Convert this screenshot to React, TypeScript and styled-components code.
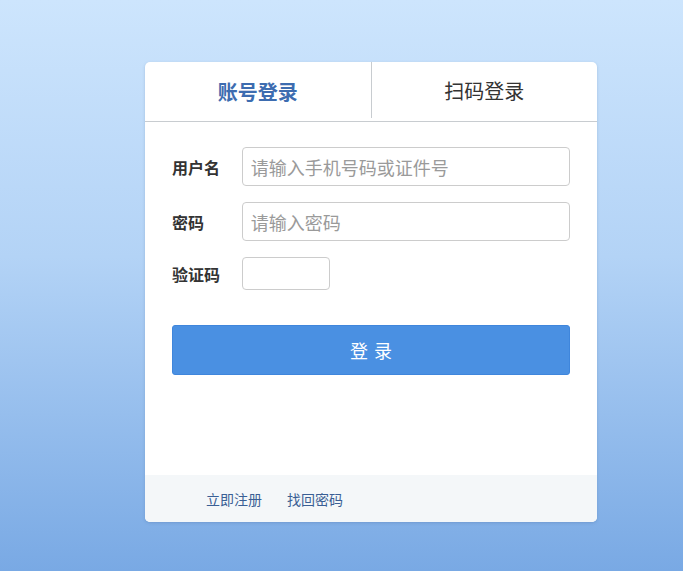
import styled, { createGlobalStyle } from "styled-components";

const GlobalStyle = createGlobalStyle`
    html, body {
        margin: 0;
        padding: 0;
    }
    body {
        font-family: "Noto Sans CJK SC", "Liberation Sans", sans-serif;
    }
`;

const Page = styled.div`
    min-height: 100vh;
    box-sizing: border-box;
    padding: 62px 0 0 145px;
    background: linear-gradient(to bottom, #cde5fd 0%, #b3d3f6 45%, #79a9e4 100%);
`;

const Card = styled.div`
    width: 452px;
    height: 460px;
    background: #fff;
    border-radius: 5px;
    box-shadow: 0 1px 3px rgba(60, 90, 140, 0.25);
    display: flex;
    flex-direction: column;
    overflow: hidden;
`;

const Tabs = styled.div`
    display: flex;
    height: 59px;
    border-bottom: 1px solid #c8ccd0;
`;

const Tab = styled.div<{ active?: boolean }>`
    flex: 1;
    display: flex;
    align-items: center;
    justify-content: center;
    font-size: 20px;
    font-weight: ${(p) => (p.active ? 700 : 400)};
    color: ${(p) => (p.active ? "#3d6cb0" : "#333")};
    & + & {
        border-left: 1px solid #c8ccd0;
        margin: 0 0 3px;
    }
`;

const Form = styled.div`
    flex: 1;
    padding: 25px 27px 0;
    display: flex;
    flex-direction: column;
    gap: 16px;
`;

const Row = styled.div`
    display: flex;
    align-items: center;
    line-height: 1;
`;

const Label = styled.label`
    width: 70px;
    font-size: 16px;
    font-weight: 700;
    color: #333;
`;

const Input = styled.input<{ short?: boolean }>`
    box-sizing: border-box;
    width: ${(p) => (p.short ? "88px" : "329px")};
    height: ${(p) => (p.short ? "33px" : "39px")};
    border: 1px solid #ccc;
    border-radius: 4px;
    padding: 0 8px;
    font-family: inherit;
    font-size: 18px;
    color: #333;
    outline: none;
    &::placeholder {
        color: #9a9a9a;
    }
`;

const SubmitButton = styled.button`
    margin-top: 19px;
    height: 50px;
    width: 398px;
    border: 1px solid #3f86dc;
    border-radius: 3px;
    background: #4a90e2;
    color: #fff;
    font-family: inherit;
    font-size: 18px;
    letter-spacing: 6px;
    text-indent: 6px;
    cursor: pointer;
`;

const Footer = styled.div`
    height: 47px;
    background: #f4f7f9;
    display: flex;
    align-items: center;
    gap: 25px;
    padding-left: 61px;
`;

const FooterLink = styled.a`
    font-size: 14px;
    color: #3a5f95;
    text-decoration: none;
`;

export default function App() {
    return (
        <Page>
            <GlobalStyle />
            <Card>
                <Tabs>
                    <Tab active>账号登录</Tab>
                    <Tab>扫码登录</Tab>
                </Tabs>
                <Form>
                    <Row>
                        <Label>用户名</Label>
                        <Input placeholder="请输入手机号码或证件号" />
                    </Row>
                    <Row>
                        <Label>密码</Label>
                        <Input type="password" placeholder="请输入密码" />
                    </Row>
                    <Row>
                        <Label>验证码</Label>
                        <Input short />
                    </Row>
                    <SubmitButton>登录</SubmitButton>
                </Form>
                <Footer>
                    <FooterLink href="#">立即注册</FooterLink>
                    <FooterLink href="#">找回密码</FooterLink>
                </Footer>
            </Card>
        </Page>
    );
}
